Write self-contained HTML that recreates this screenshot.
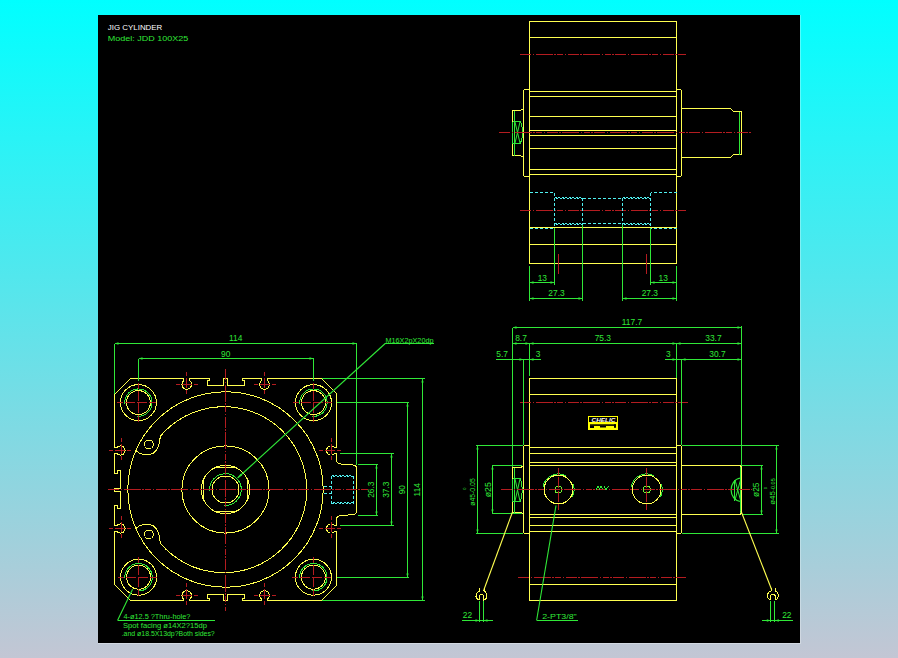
<!DOCTYPE html>
<html><head><meta charset="utf-8"><title>JIG CYLINDER JDD 100X25</title>
<style>
html,body{margin:0;padding:0;}
body{width:898px;height:658px;overflow:hidden;background:linear-gradient(to bottom,#00ffff 0%,#c3c6d4 100%);font-family:"Liberation Sans",sans-serif;}
svg{position:absolute;left:0;top:0;display:block;}
svg line,svg path,svg circle{stroke-width:1;shape-rendering:crispEdges;}
svg text{font-family:"Liberation Sans",sans-serif;}
</style></head><body>
<svg width="898" height="658" viewBox="0 0 898 658">
<rect x="98" y="15" width="702" height="628" fill="#000"/>
<rect x="800" y="15" width="1" height="629" fill="#fff" fill-opacity="0.3"/><rect x="98" y="643" width="702" height="1" fill="#fff" fill-opacity="0.3"/>
<path d="M529.5,21.5 H676.5 V263.5 H529.5 Z" stroke="#ffff50" fill="none" />
<line x1="529.5" y1="37.5" x2="676.5" y2="37.5" stroke="#ffff50" />
<line x1="529.5" y1="91.5" x2="676.5" y2="91.5" stroke="#ffff50" />
<line x1="529.5" y1="96.5" x2="676.5" y2="96.5" stroke="#ffff50" />
<line x1="529.5" y1="116.5" x2="676.5" y2="116.5" stroke="#ffff50" />
<line x1="529.5" y1="130.5" x2="676.5" y2="130.5" stroke="#ffff50" />
<line x1="529.5" y1="135.5" x2="676.5" y2="135.5" stroke="#ffff50" />
<line x1="529.5" y1="148.5" x2="676.5" y2="148.5" stroke="#ffff50" />
<line x1="529.5" y1="169.5" x2="676.5" y2="169.5" stroke="#ffff50" />
<line x1="529.5" y1="174.5" x2="676.5" y2="174.5" stroke="#ffff50" />
<line x1="529.5" y1="227.5" x2="676.5" y2="227.5" stroke="#ffff50" />
<line x1="529.5" y1="244.5" x2="676.5" y2="244.5" stroke="#ffff50" />
<path d="M529.5,89.5 H524.5 L523.5,90.5 V175.5 L524.5,176.5 H529.5" stroke="#ffff50" fill="none" />
<path d="M676.5,89.5 H680.5 L681.5,90.5 V175.5 L680.5,176.5 H676.5" stroke="#ffff50" fill="none" />
<path d="M523.5,108.5 L520.5,110.5 H512.5 V155.5 H520.5 L523.5,157.5" stroke="#ffff50" fill="none" />
<line x1="514.5" y1="110.5" x2="514.5" y2="155.5" stroke="#30e838" />
<path d="M512.5,121.5 H520.5 M512.5,143.5 H520.5 M512.5,121.5 V143.5" stroke="#30e838" fill="none" />
<path d="M515,122 L520,143 M520,122 L515,143" stroke="#30e838" fill="none" style="shape-rendering:auto"/>
<path d="M520.5,121.5 Q524.5,132.5 520.5,143.5" stroke="#30e838" fill="none" />
<path d="M681.5,108.5 H730.5 L733.5,111.5 H741.5 V154.5 H733.5 L730.5,157.5 H681.5" stroke="#ffff50" fill="none" />
<line x1="739.5" y1="111.5" x2="739.5" y2="154.5" stroke="#30e838" />
<line x1="520" y1="54.5" x2="686" y2="54.5" stroke="#b41c20" stroke-dasharray="11 1.5 1.5 1.5 17 1.5 1.5 1.5 6 1.5 1.5 1.5"/>
<line x1="499" y1="132.5" x2="751" y2="132.5" stroke="#b41c20" stroke-dasharray="11 1.5 1.5 1.5 17 1.5 1.5 1.5 6 1.5 1.5 1.5"/>
<line x1="520" y1="210.5" x2="686" y2="210.5" stroke="#b41c20" stroke-dasharray="11 1.5 1.5 1.5 17 1.5 1.5 1.5 6 1.5 1.5 1.5"/>
<line x1="529.5" y1="192.5" x2="554.5" y2="192.5" stroke="#50f0f0" stroke-dasharray="3 2"/>
<line x1="554.5" y1="192.5" x2="554.5" y2="228" stroke="#50f0f0" stroke-dasharray="3 2"/>
<line x1="529.5" y1="228.5" x2="554.5" y2="228.5" stroke="#50f0f0" stroke-dasharray="3 2"/>
<line x1="582.5" y1="197.5" x2="582.5" y2="224.5" stroke="#50f0f0" stroke-dasharray="3 2"/>
<line x1="554.5" y1="197.5" x2="582.5" y2="197.5" stroke="#50f0f0" stroke-dasharray="2 1.5"/>
<line x1="556.0" y1="198.5" x2="582.5" y2="198.5" stroke="#50f0f0" stroke-dasharray="2 1.5"/>
<line x1="554.5" y1="223.5" x2="582.5" y2="223.5" stroke="#50f0f0" stroke-dasharray="2 1.5"/>
<line x1="556.0" y1="224.5" x2="582.5" y2="224.5" stroke="#50f0f0" stroke-dasharray="2 1.5"/>
<line x1="676.5" y1="192.5" x2="650.5" y2="192.5" stroke="#50f0f0" stroke-dasharray="3 2"/>
<line x1="650.5" y1="192.5" x2="650.5" y2="228" stroke="#50f0f0" stroke-dasharray="3 2"/>
<line x1="676.5" y1="228.5" x2="650.5" y2="228.5" stroke="#50f0f0" stroke-dasharray="3 2"/>
<line x1="622.5" y1="197.5" x2="622.5" y2="224.5" stroke="#50f0f0" stroke-dasharray="3 2"/>
<line x1="622.5" y1="197.5" x2="650.5" y2="197.5" stroke="#50f0f0" stroke-dasharray="2 1.5"/>
<line x1="624.0" y1="198.5" x2="650.5" y2="198.5" stroke="#50f0f0" stroke-dasharray="2 1.5"/>
<line x1="622.5" y1="223.5" x2="650.5" y2="223.5" stroke="#50f0f0" stroke-dasharray="2 1.5"/>
<line x1="624.0" y1="224.5" x2="650.5" y2="224.5" stroke="#50f0f0" stroke-dasharray="2 1.5"/>
<line x1="582.5" y1="198.5" x2="622.5" y2="198.5" stroke="#50f0f0" stroke-dasharray="3 2"/>
<line x1="582.5" y1="223.5" x2="622.5" y2="223.5" stroke="#50f0f0" stroke-dasharray="3 2"/>
<line x1="529.5" y1="265.5" x2="529.5" y2="300.5" stroke="#30e838" />
<line x1="676.5" y1="265.5" x2="676.5" y2="300.5" stroke="#30e838" />
<line x1="554.5" y1="228" x2="554.5" y2="284.5" stroke="#30e838" />
<line x1="650.5" y1="228" x2="650.5" y2="284.5" stroke="#30e838" />
<line x1="582.5" y1="225" x2="582.5" y2="300.5" stroke="#30e838" />
<line x1="622.5" y1="225" x2="622.5" y2="300.5" stroke="#30e838" />
<line x1="529.5" y1="282.5" x2="554.5" y2="282.5" stroke="#30e838" />
<line x1="650.5" y1="282.5" x2="676.5" y2="282.5" stroke="#30e838" />
<line x1="529.5" y1="298.5" x2="582.5" y2="298.5" stroke="#30e838" />
<line x1="622.5" y1="298.5" x2="676.5" y2="298.5" stroke="#30e838" />
<polygon points="529.50,282.50 533.50,281.35 533.50,283.65" fill="#30e838" stroke="none"/>
<polygon points="554.50,282.50 550.50,283.65 550.50,281.35" fill="#30e838" stroke="none"/>
<polygon points="650.50,282.50 654.50,281.35 654.50,283.65" fill="#30e838" stroke="none"/>
<polygon points="676.50,282.50 672.50,283.65 672.50,281.35" fill="#30e838" stroke="none"/>
<polygon points="529.50,298.50 533.50,297.35 533.50,299.65" fill="#30e838" stroke="none"/>
<polygon points="582.50,298.50 578.50,299.65 578.50,297.35" fill="#30e838" stroke="none"/>
<polygon points="622.50,298.50 626.50,297.35 626.50,299.65" fill="#30e838" stroke="none"/>
<polygon points="676.50,298.50 672.50,299.65 672.50,297.35" fill="#30e838" stroke="none"/>
<line x1="558.5" y1="253.5" x2="558.5" y2="274" stroke="#b41c20" />
<line x1="646.5" y1="253.5" x2="646.5" y2="274" stroke="#b41c20" />
<text x="542.3" y="280.8" fill="#30e838" font-size="8.4" text-anchor="middle" >13</text>
<text x="556.5" y="296" fill="#30e838" font-size="8.4" text-anchor="middle" >27.3</text>
<text x="663.2" y="280.8" fill="#30e838" font-size="8.4" text-anchor="middle" >13</text>
<text x="649.8" y="296" fill="#30e838" font-size="8.4" text-anchor="middle" >27.3</text>
<path d="M130.5,378.5 H183.70 V380.75 A4.8,4.8 0 1 0 189.70,380.75 V378.5 H209.5 V380.5 H207.5 V385.5 H223.5 V378.5 H227.5 V385.5 H244.5 V380.5 H242.5 V378.5 H261.50 V380.75 A4.8,4.8 0 1 0 267.50,380.75 V378.5 H321.5 L336.5,393.5 V447.30 H334.16 A4.5,4.5 0 1 0 334.16,453.70 H336.5 V460.5 Q336.5,463.5 341,464 L353,465 Q356.5,465.3 356.5,468.5 V511 Q356.5,514.3 353,514.6 L341,515.6 Q336.5,516 336.5,519 V525.30 H334.16 A4.5,4.5 0 1 0 334.16,531.70 H336.5 V585.5 L321.5,600.5 H267.50 V599.25 A4.8,4.8 0 1 0 261.50,599.25 V600.5 H242.5 V598.5 H244.5 V594.5 H227.5 V600.5 H223.5 V594.5 H207.5 V598.5 H209.5 V600.5 H189.70 V599.25 A4.8,4.8 0 1 0 183.70,599.25 V600.5 H130.5 L114.5,584.5 V531.50 H117.01 A4.6,4.6 0 1 0 117.01,525.50 H114.5 V505.5 H117.5 V508.5 H120.5 V491.5 H114.5 V488.5 H120.5 V470.5 H117.5 V473.5 H114.5 V453.50 H117.01 A4.6,4.6 0 1 0 117.01,447.50 H114.5 V394.5 Z" stroke="#ffff50" fill="none" stroke-linejoin="round"/>
<circle cx="225.5" cy="489.5" r="97.7" stroke="#ffff50" fill="none" />
<circle cx="225.5" cy="489.5" r="43.6" stroke="#ffff50" fill="none" />
<circle cx="225.5" cy="489.5" r="24.2" stroke="#ffff50" fill="none" />
<line x1="215.5" y1="467.5" x2="235.5" y2="467.5" stroke="#ffff50" />
<line x1="203.2" y1="480.0" x2="203.2" y2="499.0" stroke="#ffff50" />
<line x1="215.5" y1="511.5" x2="235.5" y2="511.5" stroke="#ffff50" />
<line x1="247.8" y1="480.0" x2="247.8" y2="499.0" stroke="#ffff50" />
<circle cx="225.5" cy="489.5" r="13.5" stroke="#ffff50" fill="none" />
<path d="M209.70,490.50 A15.8,15.8 0 1 1 224.50,505.30" stroke="#30e838" fill="none" />
<path d="M135.7,450.3 L138.6,452.7 Q145,456.2 152.5,453.7 Q158.5,450 159.4,441.8 L160.5,436.0 A83.0,83.0 0 1 1 160.5,543.4 L159.4,537.2 Q158.5,529 152.5,525.3 Q145,522.8 138.6,526.3 L135.7,528.7" stroke="#ffff50" fill="none" />
<circle cx="148.9" cy="444.4" r="4.4" stroke="#ffff50" fill="none" />
<circle cx="148.9" cy="534.4" r="4.4" stroke="#ffff50" fill="none" />
<circle cx="138.4" cy="402.6" r="18" stroke="#ffff50" fill="none" />
<circle cx="138.4" cy="402.6" r="12" stroke="#ffff50" fill="none" />
<path d="M124.70,403.60 A13.7,13.7 0 1 1 137.40,416.30" stroke="#30e838" fill="none" />
<line x1="117.4" y1="402.6" x2="158.4" y2="402.6" stroke="#b41c20" stroke-dasharray="6 2 10 2 10 2 7"/>
<line x1="138.4" y1="382.6" x2="138.4" y2="422.6" stroke="#b41c20" stroke-dasharray="6 2 10 2 10 2 7"/>
<circle cx="313.5" cy="402.6" r="18" stroke="#ffff50" fill="none" />
<circle cx="313.5" cy="402.6" r="12" stroke="#ffff50" fill="none" />
<path d="M299.80,403.60 A13.7,13.7 0 1 1 312.50,416.30" stroke="#30e838" fill="none" />
<line x1="292.5" y1="402.6" x2="333.5" y2="402.6" stroke="#b41c20" stroke-dasharray="6 2 10 2 10 2 7"/>
<line x1="313.5" y1="382.6" x2="313.5" y2="422.6" stroke="#b41c20" stroke-dasharray="6 2 10 2 10 2 7"/>
<circle cx="138.6" cy="577.2" r="18" stroke="#ffff50" fill="none" />
<circle cx="138.6" cy="577.2" r="12" stroke="#ffff50" fill="none" />
<path d="M124.90,578.20 A13.7,13.7 0 1 1 137.60,590.90" stroke="#30e838" fill="none" />
<line x1="117.6" y1="577.2" x2="158.6" y2="577.2" stroke="#b41c20" stroke-dasharray="6 2 10 2 10 2 7"/>
<line x1="138.6" y1="557.2" x2="138.6" y2="597.2" stroke="#b41c20" stroke-dasharray="6 2 10 2 10 2 7"/>
<circle cx="313.4" cy="577.2" r="18" stroke="#ffff50" fill="none" />
<circle cx="313.4" cy="577.2" r="12" stroke="#ffff50" fill="none" />
<path d="M299.70,578.20 A13.7,13.7 0 1 1 312.40,590.90" stroke="#30e838" fill="none" />
<line x1="292.4" y1="577.2" x2="333.4" y2="577.2" stroke="#b41c20" stroke-dasharray="6 2 10 2 10 2 7"/>
<line x1="313.4" y1="557.2" x2="313.4" y2="597.2" stroke="#b41c20" stroke-dasharray="6 2 10 2 10 2 7"/>
<line x1="175.7" y1="384.5" x2="197.7" y2="384.5" stroke="#b41c20" stroke-dasharray="4 2 10 2 4"/>
<line x1="186.7" y1="371.5" x2="186.7" y2="397.5" stroke="#b41c20" stroke-dasharray="4 2 10 2 4"/>
<line x1="175.7" y1="595.5" x2="197.7" y2="595.5" stroke="#b41c20" stroke-dasharray="4 2 10 2 4"/>
<line x1="186.7" y1="582.5" x2="186.7" y2="608.5" stroke="#b41c20" stroke-dasharray="4 2 10 2 4"/>
<line x1="253.5" y1="384.5" x2="275.5" y2="384.5" stroke="#b41c20" stroke-dasharray="4 2 10 2 4"/>
<line x1="264.5" y1="371.5" x2="264.5" y2="397.5" stroke="#b41c20" stroke-dasharray="4 2 10 2 4"/>
<line x1="253.5" y1="595.5" x2="275.5" y2="595.5" stroke="#b41c20" stroke-dasharray="4 2 10 2 4"/>
<line x1="264.5" y1="582.5" x2="264.5" y2="608.5" stroke="#b41c20" stroke-dasharray="4 2 10 2 4"/>
<line x1="109" y1="450.5" x2="133" y2="450.5" stroke="#b41c20" stroke-dasharray="4 2 10 2 4"/>
<line x1="121" y1="437.5" x2="121" y2="463.5" stroke="#b41c20" stroke-dasharray="4 2 10 2 4"/>
<line x1="319" y1="450.5" x2="343" y2="450.5" stroke="#b41c20" stroke-dasharray="4 2 10 2 4"/>
<line x1="331" y1="437.5" x2="331" y2="463.5" stroke="#b41c20" stroke-dasharray="4 2 10 2 4"/>
<line x1="109" y1="528.5" x2="133" y2="528.5" stroke="#b41c20" stroke-dasharray="4 2 10 2 4"/>
<line x1="121" y1="515.5" x2="121" y2="541.5" stroke="#b41c20" stroke-dasharray="4 2 10 2 4"/>
<line x1="319" y1="528.5" x2="343" y2="528.5" stroke="#b41c20" stroke-dasharray="4 2 10 2 4"/>
<line x1="331" y1="515.5" x2="331" y2="541.5" stroke="#b41c20" stroke-dasharray="4 2 10 2 4"/>
<line x1="108" y1="489.5" x2="368" y2="489.5" stroke="#b41c20" stroke-dasharray="11 1.5 1.5 1.5 17 1.5 1.5 1.5 6 1.5 1.5 1.5"/>
<line x1="225.5" y1="369" x2="225.5" y2="610.5" stroke="#b41c20" stroke-dasharray="11 1.5 1.5 1.5 17 1.5 1.5 1.5 6 1.5 1.5 1.5"/>
<line x1="331.5" y1="475.5" x2="353" y2="475.5" stroke="#50f0f0" stroke-dasharray="2 1.5"/>
<line x1="333" y1="476.5" x2="353" y2="476.5" stroke="#50f0f0" stroke-dasharray="2 1.5"/>
<line x1="331.5" y1="503.5" x2="353" y2="503.5" stroke="#50f0f0" stroke-dasharray="2 1.5"/>
<line x1="333" y1="502.5" x2="353" y2="502.5" stroke="#50f0f0" stroke-dasharray="2 1.5"/>
<line x1="331.5" y1="475.5" x2="331.5" y2="503.5" stroke="#50f0f0" stroke-dasharray="3 2"/>
<line x1="353" y1="475.5" x2="353" y2="503.5" stroke="#50f0f0" stroke-dasharray="3 2"/>
<line x1="324" y1="486.5" x2="331.5" y2="486.5" stroke="#50f0f0" stroke-dasharray="3 2"/>
<line x1="324" y1="493.5" x2="331.5" y2="493.5" stroke="#50f0f0" stroke-dasharray="3 2"/>
<line x1="114.5" y1="343.5" x2="356.5" y2="343.5" stroke="#30e838" />
<line x1="114.5" y1="343.5" x2="114.5" y2="394" stroke="#30e838" />
<line x1="356.5" y1="343.5" x2="356.5" y2="465" stroke="#30e838" />
<polygon points="114.50,343.50 118.50,342.35 118.50,344.65" fill="#30e838" stroke="none"/>
<polygon points="356.50,343.50 352.50,344.65 352.50,342.35" fill="#30e838" stroke="none"/>
<line x1="138.5" y1="358.5" x2="313.5" y2="358.5" stroke="#30e838" />
<line x1="138.5" y1="358.5" x2="138.5" y2="381" stroke="#30e838" />
<line x1="313.5" y1="358.5" x2="313.5" y2="381" stroke="#30e838" />
<polygon points="138.50,358.50 142.50,357.35 142.50,359.65" fill="#30e838" stroke="none"/>
<polygon points="313.50,358.50 309.50,359.65 309.50,357.35" fill="#30e838" stroke="none"/>
<text x="235.7" y="340.6" fill="#30e838" font-size="8.4" text-anchor="middle" >114</text>
<text x="225.7" y="356.8" fill="#30e838" font-size="8.4" text-anchor="middle" >90</text>
<line x1="321.5" y1="378.5" x2="424.5" y2="378.5" stroke="#30e838" />
<line x1="321.5" y1="600.5" x2="424.5" y2="600.5" stroke="#30e838" />
<line x1="422.5" y1="378.5" x2="422.5" y2="600.5" stroke="#30e838" />
<polygon points="422.50,378.50 423.65,382.50 421.35,382.50" fill="#30e838" stroke="none"/>
<polygon points="422.50,600.50 421.35,596.50 423.65,596.50" fill="#30e838" stroke="none"/>
<line x1="337" y1="402.5" x2="409" y2="402.5" stroke="#30e838" />
<line x1="337" y1="577.5" x2="409" y2="577.5" stroke="#30e838" />
<line x1="407.5" y1="402.5" x2="407.5" y2="577.5" stroke="#30e838" />
<polygon points="407.50,402.50 408.65,406.50 406.35,406.50" fill="#30e838" stroke="none"/>
<polygon points="407.50,577.50 406.35,573.50 408.65,573.50" fill="#30e838" stroke="none"/>
<line x1="339.5" y1="453.5" x2="393.5" y2="453.5" stroke="#30e838" />
<line x1="339.5" y1="525.5" x2="393.5" y2="525.5" stroke="#30e838" />
<line x1="391.5" y1="453.5" x2="391.5" y2="525.5" stroke="#30e838" />
<polygon points="391.50,453.50 392.65,457.50 390.35,457.50" fill="#30e838" stroke="none"/>
<polygon points="391.50,525.50 390.35,521.50 392.65,521.50" fill="#30e838" stroke="none"/>
<line x1="357.5" y1="464.5" x2="378" y2="464.5" stroke="#30e838" />
<line x1="357.5" y1="515.5" x2="378" y2="515.5" stroke="#30e838" />
<line x1="376.5" y1="464.5" x2="376.5" y2="515.5" stroke="#30e838" />
<polygon points="376.50,464.50 377.65,468.50 375.35,468.50" fill="#30e838" stroke="none"/>
<polygon points="376.50,515.50 375.35,511.50 377.65,511.50" fill="#30e838" stroke="none"/>
<text x="374.3" y="489.7" fill="#30e838" font-size="8.4" text-anchor="middle" transform="rotate(-90 374.3 489.7)" >26.3</text>
<text x="389.2" y="489.7" fill="#30e838" font-size="8.4" text-anchor="middle" transform="rotate(-90 389.2 489.7)" >37.3</text>
<text x="405" y="489.7" fill="#30e838" font-size="8.4" text-anchor="middle" transform="rotate(-90 405 489.7)" >90</text>
<text x="420.3" y="489.7" fill="#30e838" font-size="8.4" text-anchor="middle" transform="rotate(-90 420.3 489.7)" >114</text>
<line x1="385.2" y1="343.5" x2="237.6" y2="478" stroke="#30e838"  style="shape-rendering:auto;stroke-width:1.1"/>
<line x1="385.2" y1="343.5" x2="433.5" y2="343.5" stroke="#30e838" />
<polygon points="237.60,478.00 240.49,473.75 242.10,475.52" fill="#30e838" stroke="none"/>
<text x="385.5" y="342.5" fill="#30e838" font-size="7.5" text-anchor="start" textLength="48" lengthAdjust="spacingAndGlyphs" >M16X2pX20dp</text>
<line x1="132.6" y1="589.3" x2="117.5" y2="620.5" stroke="#30e838"  style="shape-rendering:auto;stroke-width:1.1"/>
<line x1="117.5" y1="620.5" x2="214.5" y2="620.5" stroke="#30e838" />
<text x="123.4" y="618.8" fill="#30e838" font-size="7.5" text-anchor="start" textLength="67" lengthAdjust="spacingAndGlyphs" >4-&#248;12.5 ?Thru-hole?</text>
<text x="123" y="627.8" fill="#30e838" font-size="7.5" text-anchor="start" textLength="84" lengthAdjust="spacingAndGlyphs" >Spot facing  &#248;14X2?15dp</text>
<text x="121.7" y="635.6" fill="#30e838" font-size="7.5" text-anchor="start" textLength="93" lengthAdjust="spacingAndGlyphs" >.and &#248;18.5X13dp?Both sides?</text>
<path d="M529.5,378.5 H676.5 V600.5 H529.5 Z" stroke="#ffff50" fill="none" />
<line x1="529.5" y1="394.5" x2="676.5" y2="394.5" stroke="#ffff50" />
<line x1="529.5" y1="447.5" x2="676.5" y2="447.5" stroke="#ffff50" />
<line x1="529.5" y1="453.5" x2="676.5" y2="453.5" stroke="#ffff50" />
<line x1="529.5" y1="462.5" x2="676.5" y2="462.5" stroke="#ffff50" />
<line x1="529.5" y1="465.5" x2="676.5" y2="465.5" stroke="#ffff50" />
<line x1="529.5" y1="514.5" x2="676.5" y2="514.5" stroke="#ffff50" />
<line x1="529.5" y1="517" x2="676.5" y2="517" stroke="#ffff50" />
<line x1="529.5" y1="525.8" x2="676.5" y2="525.8" stroke="#ffff50" />
<line x1="529.5" y1="531.2" x2="676.5" y2="531.2" stroke="#ffff50" />
<line x1="529.5" y1="584.5" x2="676.5" y2="584.5" stroke="#ffff50" />
<path d="M529.5,445.5 H524.5 L523.5,446.5 V532.5 L524.5,533.5 H529.5" stroke="#ffff50" fill="none" />
<path d="M676.5,445.5 H680.5 L681.5,446.5 V532.5 L680.5,533.5 H676.5" stroke="#ffff50" fill="none" />
<path d="M523.5,465.5 L521,467.5 H512.5 V512.5 H521 L523.5,514.5" stroke="#ffff50" fill="none" />
<path d="M681.5,465.5 H740 L741.5,466.7 V513 L740,514.5 H681.5" stroke="#ffff50" fill="none" />
<line x1="514.5" y1="467.5" x2="514.5" y2="512.5" stroke="#30e838" />
<path d="M512.5,478.5 H520.5 M512.5,501.5 H520.5 M512.5,478.5 V501.5" stroke="#30e838" fill="none" />
<path d="M515,479 L520,501 M520,479 L515,501" stroke="#30e838" fill="none" style="shape-rendering:auto"/>
<path d="M520.5,478.5 Q524,490 520.5,501.5" stroke="#30e838" fill="none" />
<path d="M740.5,478 C728,480 728,500 740.5,501.5" stroke="#30e838" fill="none" style="shape-rendering:auto;stroke-width:1.2"/>
<line x1="734.5" y1="479.5" x2="734.5" y2="500.5" stroke="#30e838" />
<path d="M735,480 L740.5,500 M740.5,480 L735,500" stroke="#30e838" fill="none" style="shape-rendering:auto"/>
<line x1="740.5" y1="466.5" x2="740.5" y2="513" stroke="#30e838" />
<circle cx="558.5" cy="489.5" r="14.4" stroke="#ffff50" fill="none" />
<path d="M543.0,487 A15.6,15.6 0 0 1 565.5,475.6" stroke="#30e838" fill="none" />
<path d="M573.3,484.5 A15.6,15.6 0 0 1 572.0,497.3" stroke="#30e838" fill="none" />
<circle cx="558.5" cy="489.5" r="3.5" stroke="#70f030" fill="none" />
<line x1="558.5" y1="467.5" x2="558.5" y2="510" stroke="#b41c20" stroke-dasharray="7 2 11 3 11 2 7"/>
<circle cx="646.7" cy="489.5" r="14.4" stroke="#ffff50" fill="none" />
<path d="M631.2,487 A15.6,15.6 0 0 1 653.7,475.6" stroke="#30e838" fill="none" />
<path d="M661.5,484.5 A15.6,15.6 0 0 1 660.2,497.3" stroke="#30e838" fill="none" />
<circle cx="646.7" cy="489.5" r="3.5" stroke="#70f030" fill="none" />
<line x1="646.7" y1="467.5" x2="646.7" y2="510" stroke="#b41c20" stroke-dasharray="7 2 11 3 11 2 7"/>
<line x1="520" y1="402.5" x2="688" y2="402.5" stroke="#b41c20" stroke-dasharray="11 1.5 1.5 1.5 17 1.5 1.5 1.5 6 1.5 1.5 1.5"/>
<line x1="501" y1="489.5" x2="751.5" y2="489.5" stroke="#b41c20" stroke-dasharray="11 1.5 1.5 1.5 17 1.5 1.5 1.5 6 1.5 1.5 1.5"/>
<line x1="518" y1="577.5" x2="686" y2="577.5" stroke="#b41c20" stroke-dasharray="11 1.5 1.5 1.5 17 1.5 1.5 1.5 6 1.5 1.5 1.5"/>
<rect x="588.5" y="416.5" width="29" height="13" fill="#000" stroke="#ffff00"/>
<rect x="589" y="422" width="28.5" height="7.5" fill="#ffff00"/>
<rect x="590" y="424.3" width="26" height="1.6" fill="#000"/>
<rect x="590" y="426" width="4" height="2" fill="#000"/><rect x="600" y="426" width="6" height="1.5" fill="#000"/><rect x="614" y="424.3" width="2" height="3.5" fill="#000"/>
<text x="603.5" y="421.6" fill="#fff" font-size="5.5" text-anchor="middle" textLength="24" lengthAdjust="spacingAndGlyphs" font-weight="bold" font-style="italic">CHELIC</text>
<path d="M596,489.5 L598,486 L599.5,489 L601,486 L602.5,489.5 M604,486.5 L606,489.5 L608.5,486" stroke="#30e838" fill="none" />
<line x1="512.5" y1="327.5" x2="741.5" y2="327.5" stroke="#30e838" />
<line x1="512.5" y1="327.5" x2="512.5" y2="467" stroke="#30e838" />
<line x1="741.5" y1="326" x2="741.5" y2="465.5" stroke="#30e838" />
<polygon points="512.50,327.50 516.50,326.35 516.50,328.65" fill="#30e838" stroke="none"/>
<polygon points="741.50,327.50 737.50,328.65 737.50,326.35" fill="#30e838" stroke="none"/>
<text x="632" y="324.5" fill="#30e838" font-size="8.4" text-anchor="middle" >117.7</text>
<line x1="512.5" y1="343.5" x2="741.5" y2="343.5" stroke="#30e838" />
<line x1="529.5" y1="343.5" x2="529.5" y2="376" stroke="#30e838" />
<line x1="676.5" y1="343.5" x2="676.5" y2="378" stroke="#30e838" />
<polygon points="512.50,343.50 516.50,342.35 516.50,344.65" fill="#30e838" stroke="none"/>
<polygon points="529.50,343.50 525.50,344.65 525.50,342.35" fill="#30e838" stroke="none"/>
<polygon points="529.50,343.50 533.50,342.35 533.50,344.65" fill="#30e838" stroke="none"/>
<polygon points="676.50,343.50 672.50,344.65 672.50,342.35" fill="#30e838" stroke="none"/>
<polygon points="676.50,343.50 680.50,342.35 680.50,344.65" fill="#30e838" stroke="none"/>
<polygon points="741.50,343.50 737.50,344.65 737.50,342.35" fill="#30e838" stroke="none"/>
<text x="521" y="340.8" fill="#30e838" font-size="8.4" text-anchor="middle" >8.7</text>
<text x="602.8" y="340.8" fill="#30e838" font-size="8.4" text-anchor="middle" >75.3</text>
<text x="713.4" y="340.8" fill="#30e838" font-size="8.4" text-anchor="middle" >33.7</text>
<line x1="496" y1="359.5" x2="541" y2="359.5" stroke="#30e838" />
<line x1="665" y1="359.5" x2="741.5" y2="359.5" stroke="#30e838" />
<line x1="523.5" y1="359.5" x2="523.5" y2="445" stroke="#30e838" />
<line x1="681.5" y1="359.5" x2="681.5" y2="445" stroke="#30e838" />
<polygon points="523.50,359.50 519.50,360.65 519.50,358.35" fill="#30e838" stroke="none"/>
<polygon points="529.50,359.50 533.50,358.35 533.50,360.65" fill="#30e838" stroke="none"/>
<polygon points="676.50,359.50 672.50,360.65 672.50,358.35" fill="#30e838" stroke="none"/>
<polygon points="681.50,359.50 685.50,358.35 685.50,360.65" fill="#30e838" stroke="none"/>
<polygon points="741.50,359.50 737.50,360.65 737.50,358.35" fill="#30e838" stroke="none"/>
<text x="502.2" y="357.2" fill="#30e838" font-size="8.4" text-anchor="middle" >5.7</text>
<text x="538" y="357.2" fill="#30e838" font-size="8.4" text-anchor="middle" >3</text>
<text x="668.3" y="357.2" fill="#30e838" font-size="8.4" text-anchor="middle" >3</text>
<text x="717.4" y="357.2" fill="#30e838" font-size="8.4" text-anchor="middle" >30.7</text>
<line x1="476" y1="445.5" x2="523" y2="445.5" stroke="#30e838" />
<line x1="476" y1="533.5" x2="523" y2="533.5" stroke="#30e838" />
<line x1="477.5" y1="445.5" x2="477.5" y2="533.5" stroke="#30e838" />
<polygon points="477.50,445.50 478.65,449.50 476.35,449.50" fill="#30e838" stroke="none"/>
<polygon points="477.50,533.50 476.35,529.50 478.65,529.50" fill="#30e838" stroke="none"/>
<line x1="491.5" y1="465.5" x2="521.5" y2="465.5" stroke="#30e838" />
<line x1="491.5" y1="513.5" x2="521.5" y2="513.5" stroke="#30e838" />
<line x1="492.5" y1="465.5" x2="492.5" y2="513.5" stroke="#30e838" />
<polygon points="492.50,465.50 493.65,469.50 491.35,469.50" fill="#30e838" stroke="none"/>
<polygon points="492.50,513.50 491.35,509.50 493.65,509.50" fill="#30e838" stroke="none"/>
<text x="475.2" y="492" fill="#30e838" font-size="7.5" text-anchor="middle" transform="rotate(-90 475.2 492)" textLength="27.5" lengthAdjust="spacingAndGlyphs" >&#248;45-0.05</text>
<text x="466" y="488.5" fill="#30e838" font-size="4" text-anchor="middle" transform="rotate(-90 466 488.5)" >0</text>
<text x="490.8" y="489.7" fill="#30e838" font-size="9.3" text-anchor="middle" transform="rotate(-90 490.8 489.7)" textLength="15" lengthAdjust="spacingAndGlyphs" >&#248;25</text>
<line x1="682" y1="445.5" x2="778.5" y2="445.5" stroke="#30e838" />
<line x1="682" y1="533.5" x2="778.5" y2="533.5" stroke="#30e838" />
<line x1="776.5" y1="445.5" x2="776.5" y2="533.5" stroke="#30e838" />
<polygon points="776.50,445.50 777.65,449.50 775.35,449.50" fill="#30e838" stroke="none"/>
<polygon points="776.50,533.50 775.35,529.50 777.65,529.50" fill="#30e838" stroke="none"/>
<line x1="742" y1="465.5" x2="763" y2="465.5" stroke="#30e838" />
<line x1="742" y1="514.5" x2="763" y2="514.5" stroke="#30e838" />
<line x1="761.5" y1="465.5" x2="761.5" y2="514.5" stroke="#30e838" />
<polygon points="761.50,465.50 762.65,469.50 760.35,469.50" fill="#30e838" stroke="none"/>
<polygon points="761.50,514.50 760.35,510.50 762.65,510.50" fill="#30e838" stroke="none"/>
<text x="758.9" y="489.7" fill="#30e838" font-size="8.4" text-anchor="middle" transform="rotate(-90 758.9 489.7)" textLength="14.5" lengthAdjust="spacingAndGlyphs" >&#248;25</text>
<text x="774.6" y="504.8" fill="#30e838" font-size="8" text-anchor="start" transform="rotate(-90 774.6 504.8)" >&#248;45</text>
<text x="774.6" y="490.8" fill="#30e838" font-size="5" text-anchor="start" transform="rotate(-90 774.6 490.8)" textLength="12.5" lengthAdjust="spacingAndGlyphs" >-0.05</text>
<text x="767" y="488" fill="#30e838" font-size="4" text-anchor="middle" transform="rotate(-90 767 488)" >0</text>
<line x1="512.5" y1="512" x2="483.8" y2="590" stroke="#ffff50"  style="shape-rendering:auto;stroke-width:1.1"/>
<line x1="741" y1="511" x2="771.8" y2="590" stroke="#ffff50"  style="shape-rendering:auto;stroke-width:1.1"/>
<path d="M479.1,600 V596.5 Q479.1,594.6 481.5,594.6 Q483.9,594.6 483.9,596.5 V600 Q487.7,598.5 486.9,594.5 Q486.1,591.6 483.9,591 L484.7,588.2 M479.1,600 Q475.3,598.5 476.1,594.5 Q476.9,591.6 479.9,591 V588.4" stroke="#ffff50" fill="none" />
<line x1="479.5" y1="601" x2="479.5" y2="621.5" stroke="#30e838" />
<line x1="483.5" y1="601" x2="483.5" y2="621.5" stroke="#30e838" />
<polygon points="479.50,620.50 475.50,621.65 475.50,619.35" fill="#30e838" stroke="none"/>
<polygon points="483.50,620.50 487.50,619.35 487.50,621.65" fill="#30e838" stroke="none"/>
<path d="M770.4,600 V596.5 Q770.4,594.6 772.8,594.6 Q775.1999999999999,594.6 775.1999999999999,596.5 V600 Q779.0,598.5 778.1999999999999,594.5 Q777.4,591.6 775.1999999999999,591 L776.0,588.2 M770.4,600 Q766.5999999999999,598.5 767.4,594.5 Q768.1999999999999,591.6 771.1999999999999,591 V588.4" stroke="#ffff50" fill="none" />
<line x1="770.8" y1="601" x2="770.8" y2="621.5" stroke="#30e838" />
<line x1="774.8" y1="601" x2="774.8" y2="621.5" stroke="#30e838" />
<polygon points="770.80,620.50 766.80,621.65 766.80,619.35" fill="#30e838" stroke="none"/>
<polygon points="774.80,620.50 778.80,619.35 778.80,621.65" fill="#30e838" stroke="none"/>
<line x1="462" y1="620.5" x2="493" y2="620.5" stroke="#30e838" />
<line x1="761.5" y1="620.5" x2="792.5" y2="620.5" stroke="#30e838" />
<text x="467.5" y="618.4" fill="#30e838" font-size="8.4" text-anchor="middle" >22</text>
<text x="786.8" y="618.4" fill="#30e838" font-size="8.4" text-anchor="middle" >22</text>
<line x1="556" y1="505.5" x2="536.6" y2="620.5" stroke="#30e838"  style="shape-rendering:auto;stroke-width:1.1"/>
<line x1="536.6" y1="620.5" x2="577.5" y2="620.5" stroke="#30e838" />
<text x="542.2" y="618.8" fill="#30e838" font-size="7.5" text-anchor="start" textLength="34.5" lengthAdjust="spacingAndGlyphs" >2-PT3/8&quot;</text>
<text x="107.8" y="30.1" fill="#fff" font-size="8" text-anchor="start" textLength="54.5" lengthAdjust="spacingAndGlyphs" >JIG CYLINDER</text>
<text x="107.8" y="40.7" fill="#30e838" font-size="8" text-anchor="start" textLength="80.5" lengthAdjust="spacingAndGlyphs" >Model: JDD 100X25</text>
</svg>
</body></html>
